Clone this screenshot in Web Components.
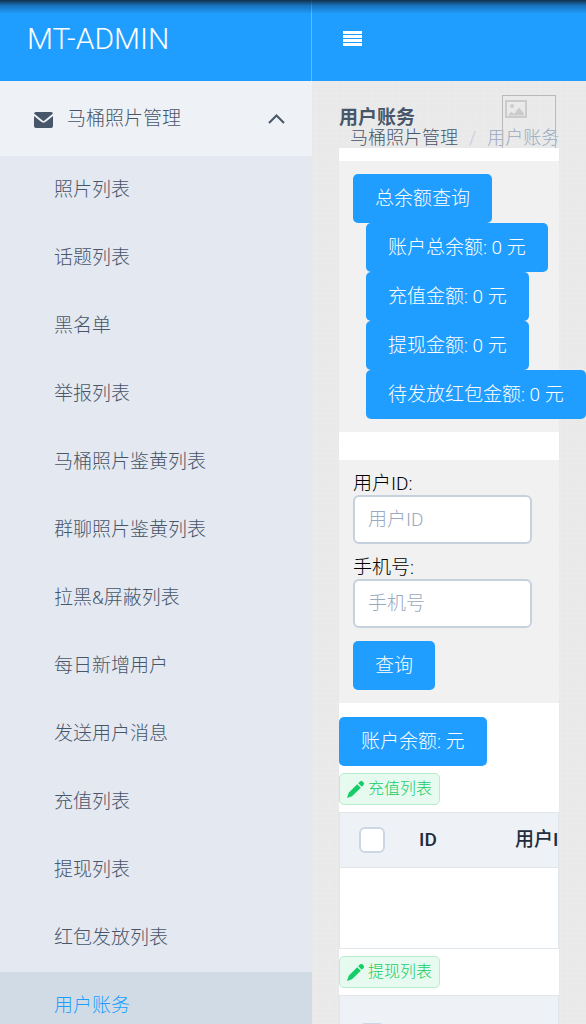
<!DOCTYPE html>
<html lang="zh-CN">
<head>
<meta charset="utf-8">
<meta name="viewport" content="width=device-width, initial-scale=1">
<title>MT-ADMIN</title>
<style>
  body {
    --color-primary: #209eff;
    --color-text: #475669;
    --color-muted: #99a9bf;
    --color-panel: #f1f1f1;
    --color-line: #dfe6ec;
    margin: 0;
    font: 300 19px/22px Roboto, "Noto Sans CJK SC", sans-serif;
    color: var(--color-text);
  }
</style>
</head>
<body>
<mt-app>
  <mt-sidebar slot="sidebar" brand="MT-ADMIN" group="马桶照片管理">
    <mt-menu-item>照片列表</mt-menu-item>
    <mt-menu-item>话题列表</mt-menu-item>
    <mt-menu-item>黑名单</mt-menu-item>
    <mt-menu-item>举报列表</mt-menu-item>
    <mt-menu-item>马桶照片鉴黄列表</mt-menu-item>
    <mt-menu-item>群聊照片鉴黄列表</mt-menu-item>
    <mt-menu-item>拉黑&amp;屏蔽列表</mt-menu-item>
    <mt-menu-item>每日新增用户</mt-menu-item>
    <mt-menu-item>发送用户消息</mt-menu-item>
    <mt-menu-item>充值列表</mt-menu-item>
    <mt-menu-item>提现列表</mt-menu-item>
    <mt-menu-item>红包发放列表</mt-menu-item>
    <mt-menu-item active>用户账务</mt-menu-item>
  </mt-sidebar>

  <mt-page-head heading="用户账务" parent="马桶照片管理"></mt-page-head>
  <mt-card>
    <mt-panel>
      <mt-button>总余额查询</mt-button>
      <mt-button inset>账户总余额: 0 元</mt-button>
      <mt-button inset>充值金额: 0 元</mt-button>
      <mt-button inset>提现金额: 0 元</mt-button>
      <mt-button inset>待发放红包金额: 0 元</mt-button>
    </mt-panel>
    <mt-panel>
      <mt-field label="用户ID"></mt-field>
      <mt-field label="手机号"></mt-field>
      <mt-button>查询</mt-button>
    </mt-panel>
    <mt-button>账户余额: 元</mt-button>
    <mt-tag>充值列表</mt-tag>
    <mt-table></mt-table>
    <mt-tag>提现列表</mt-tag>
    <mt-table tall></mt-table>
  </mt-card>
</mt-app>

<script>
class BaseElement extends HTMLElement {

  constructor(html) {
    super();
    this.root = this.attachShadow({mode: 'open'});
    const template = document.createElement('template');
    template.innerHTML = html;
    this.root.appendChild(template.content.cloneNode(true));
  }

  setText(selector, attribute) {
    this.root.querySelector(selector).textContent = this.getAttribute(attribute);
  }
}

class MtApp extends BaseElement {
  constructor() {
    super(`
      <style>
        :host {
          display: grid;
          grid-template-columns: 312px minmax(0, 1fr);
          position: relative;
          height: 100vh;
          overflow: hidden;
          background-color: #e9e9e9;
          background-image:
            repeating-linear-gradient(0deg, rgba(255, 255, 255, .08) 0 1px, transparent 1px 5px),
            repeating-linear-gradient(90deg, rgba(255, 255, 255, .08) 0 1px, transparent 1px 7px);
        }
        /* status bar shade */
        :host::before {
          content: "";
          position: absolute;
          inset: 0 0 auto;
          height: 14px;
          background: linear-gradient(rgba(15, 30, 45, .85), rgba(15, 50, 85, .4) 40%, transparent);
          pointer-events: none;
          z-index: 1;
        }
        .page {
          min-width: 0;
          overflow: auto;
          scrollbar-width: none;
        }
        header {
          display: flex;
          align-items: center;
          box-sizing: border-box;
          height: 81px;
          padding: 0 30px 4px;
          background: var(--color-primary);
        }
        button {
          display: flex;
          padding: 0;
          border: 0;
          background: none;
          color: #fff;
          cursor: pointer;
        }
      </style>
      <slot name="sidebar"></slot>
      <div class="page">
        <header>
          <button type="button" aria-label="菜单">
            <svg width="20" height="16" viewBox="0 0 20 16" fill="currentColor">
              <path d="M1 0h19v3H1zM1 4h19v3H1zM1 8h19v3H1zM1 12h19v3H1z"/>
            </svg>
          </button>
        </header>
        <main><slot></slot></main>
      </div>
    `);
  }
}

class MtSidebar extends BaseElement {
  constructor() {
    super(`
      <style>
        :host {
          display: block;
          overflow: auto;
          scrollbar-width: none;
          background: #e4e8f1;
        }
        .brand {
          display: flex;
          align-items: center;
          box-sizing: border-box;
          height: 81px;
          padding: 0 27px 4px;
          border-right: 1px solid #62bbff;
          background: var(--color-primary);
          color: #fff;
          font-size: 30px;
          text-decoration: none;
        }
        .group {
          display: flex;
          align-items: center;
          box-sizing: border-box;
          width: 100%;
          height: 75px;
          padding: 0 26px 0 33px;
          border: 0;
          background: #eef1f6;
          color: inherit;
          font: inherit;
          cursor: pointer;
        }
        .mail { margin: 3px 13px 0 0; }
        .arrow { margin-left: auto; }
      </style>
      <a class="brand" href="#"></a>
      <button class="group" type="button" aria-expanded="true">
        <svg class="mail" width="21" height="16" viewBox="0 0 21 16" fill="currentColor">
          <path d="M3 0h15a2 2 0 0 1 2 1.500L10.500 9.200 1 1.500A2 2 0 0 1 3 0z"/>
          <path d="M1 4l6.800 5.600c1.900 1.500 3.500 1.500 5.400 0L20 4v10a2 2 0 0 1-2 2H3a2 2 0 0 1-2-2z"/>
        </svg>
        <span class="name"></span>
        <svg class="arrow" width="19" height="12" viewBox="0 0 19 12" fill="none" stroke="currentColor" stroke-width="2">
          <path d="M2 10l7.500-7.500L17 10"/>
        </svg>
      </button>
      <nav><slot></slot></nav>
    `);
  }

  connectedCallback() {
    this.setText('.brand', 'brand');
    this.setText('.name', 'group');
  }
}

class MtMenuItem extends BaseElement {
  constructor() {
    super(`
      <style>
        :host { display: block; }
        a {
          display: flex;
          align-items: center;
          height: 68px;
          padding: 0 54px;
          color: inherit;
          text-decoration: none;
          white-space: nowrap;
        }
        :host([active]) a {
          background: #d1dbe5;
          color: var(--color-primary);
        }
      </style>
      <a href="#"><slot></slot></a>
    `);
  }
}

class MtPageHead extends BaseElement {
  constructor() {
    super(`
      <style>
        :host {
          display: block;
          position: relative;
          padding: 27px 27px 0;
          overflow: hidden;
          line-height: 20px;
          white-space: nowrap;
        }
        h1 {
          margin: 0;
          font-size: 19px;
          font-weight: 700;
          line-height: 20px;
        }
        nav {
          display: flex;
          gap: 11px;
          padding-left: 11px;
          font-size: 18px;
        }
        a {
          color: inherit;
          text-decoration: none;
        }
        .divider { color: #c0ccda; }
        .current { color: var(--color-muted); }
        /* user picture that has not loaded */
        .avatar {
          position: absolute;
          top: 14px;
          right: 30px;
          box-sizing: border-box;
          width: 54px;
          height: 54px;
          padding: 4px 2px;
          border: 1px solid #b9b9b9;
          color: #cbcbcb;
        }
      </style>
      <div class="avatar">
        <svg width="22" height="18" viewBox="0 0 22 18" fill="none" stroke="currentColor" stroke-width="2">
          <path d="M1 1h20v16H1z"/>
          <circle cx="7" cy="6" r="2" fill="currentColor" stroke="none"/>
          <path d="M3 15.500l3.500-4 2.500 2.500 5-6.500 5 6v2z" fill="currentColor" stroke="none"/>
        </svg>
      </div>
      <h1></h1>
      <nav>
        <a href="#"></a>
        <span class="divider">/</span>
        <span class="current"></span>
      </nav>
    `);
  }

  connectedCallback() {
    this.setText('h1', 'heading');
    this.setText('a', 'parent');
    this.setText('.current', 'heading');
  }
}

class MtCard extends BaseElement {
  constructor() {
    super(`
      <style>
        :host {
          display: block;
          margin: 0 27px;
          padding: 13px 0;
          background: #fff;
        }
      </style>
      <slot></slot>
    `);
  }
}

class MtPanel extends BaseElement {
  constructor() {
    super(`
      <style>
        :host {
          display: block;
          padding: 13px 14px;
          margin-bottom: 14px;
          background: var(--color-panel);
        }
        :host(:first-child) { margin-bottom: 28px; }
      </style>
      <slot></slot>
    `);
  }
}

class MtButton extends BaseElement {
  constructor() {
    super(`
      <style>
        :host { display: block; }
        :host([inset]) { margin-left: 13px; }
        button {
          height: 49px;
          padding: 0 22px;
          border: 0;
          border-radius: 5px;
          background: var(--color-primary);
          color: #fff;
          font: inherit;
          white-space: nowrap;
          cursor: pointer;
        }
      </style>
      <button type="button"><slot></slot></button>
    `);
  }
}

class MtField extends BaseElement {
  constructor() {
    super(`
      <style>
        :host {
          display: block;
          margin-bottom: 13px;
        }
        label {
          display: block;
          color: #000;
        }
        input {
          display: block;
          box-sizing: border-box;
          width: 179px;
          max-width: 100%;
          height: 49px;
          padding: 0 13px;
          border: 2px solid #c6d1de;
          border-radius: 6px;
          background: #fff;
          color: inherit;
          font: inherit;
        }
        input::placeholder {
          color: var(--color-muted);
          opacity: 1;
        }
      </style>
      <label for="input"></label>
      <input id="input" type="text">
    `);
  }

  connectedCallback() {
    const label = this.getAttribute('label');
    this.root.querySelector('label').textContent = label + ':';
    this.root.querySelector('input').placeholder = label;
  }
}

class MtTag extends BaseElement {
  constructor() {
    super(`
      <style>
        :host {
          display: flex;
          margin: 7px 0;
        }
        span {
          display: flex;
          align-items: center;
          gap: 4px;
          box-sizing: border-box;
          height: 32px;
          padding: 0 7px;
          border: 1px solid #b8ecca;
          border-radius: 5px;
          background: #e7faf0;
          color: #13ce66;
          font-size: 16px;
          white-space: nowrap;
        }
      </style>
      <span>
        <svg width="17" height="17" viewBox="0 0 17 17" fill="currentColor">
          <path d="M10.200 3.200l3.600 3.600L5 15.300 0 17l1.700-5.300z"/>
          <path d="M11.200 2.200l1.200-1.300a2.600 2.600 0 0 1 3.700 3.700l-1.300 1.200z"/>
        </svg>
        <slot></slot>
      </span>
    `);
  }
}

class MtTable extends BaseElement {
  constructor() {
    super(`
      <style>
        :host {
          display: block;
          box-sizing: border-box;
          height: 137px;
          overflow: hidden;
          border: 1px solid var(--color-line);
          background: #fff;
        }
        table {
          width: 400px;
          table-layout: fixed;
          border-collapse: collapse;
        }
        th {
          box-sizing: border-box;
          height: 54px;
          padding: 0 15px;
          border-bottom: 1px solid var(--color-line);
          background: #eef1f6;
          color: #1f2d3d;
          font-weight: 500;
          text-align: left;
          white-space: nowrap;
        }
        :host([tall]) th { height: 81px; }
        .check {
          width: 64px;
          padding: 0 0 0 19px;
        }
        .id { width: 96px; }
        input {
          display: block;
          appearance: none;
          box-sizing: border-box;
          width: 26px;
          height: 26px;
          margin: 0;
          border: 2px solid #cdd7e3;
          border-radius: 6px;
          background: #fff;
        }
      </style>
      <table>
        <thead>
          <tr>
            <th class="check"><input type="checkbox" aria-label="全选"></th>
            <th class="id">ID</th>
            <th>用户ID</th>
          </tr>
        </thead>
      </table>
    `);
  }
}

customElements.define('mt-app', MtApp);
customElements.define('mt-sidebar', MtSidebar);
customElements.define('mt-menu-item', MtMenuItem);
customElements.define('mt-page-head', MtPageHead);
customElements.define('mt-card', MtCard);
customElements.define('mt-panel', MtPanel);
customElements.define('mt-button', MtButton);
customElements.define('mt-field', MtField);
customElements.define('mt-tag', MtTag);
customElements.define('mt-table', MtTable);
</script>
</body>
</html>
